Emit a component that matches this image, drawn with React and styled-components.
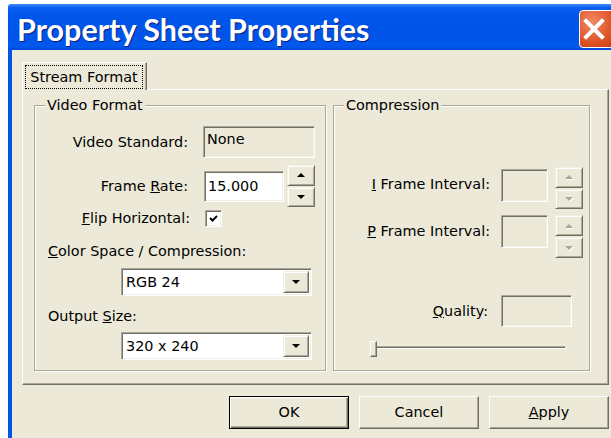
import React from 'react';
import styled, { createGlobalStyle } from 'styled-components';

const GlobalStyle = createGlobalStyle`
  html, body {
    margin: 0;
    padding: 0;
    background: #ffffff;
    overflow: hidden;
  }
  body {
    font-family: "DejaVu Sans", "Liberation Sans", Arial, sans-serif;
    font-size: 14.4px;
    color: #000;
  }
`;

const Screen = styled.div`
  width: 611px;
  height: 438px;
  overflow: hidden;
  padding: 4px 0 0 8px;
  box-sizing: border-box;
`;

const Window = styled.div`
  width: 612px;
  display: flex;
  flex-direction: column;
  border-radius: 3px 3px 0 0;
  overflow: hidden;
`;

const TitleBar = styled.div`
  height: 46px;
  display: flex;
  align-items: flex-start;
  justify-content: space-between;
  padding-left: 9px;
  background: linear-gradient(
    #3c8cf8 0%,
    #0a5ff0 8%,
    #0055ea 30%,
    #0053e6 70%,
    #0059ee 92%,
    #0046d8 100%
  );
`;

const Title = styled.span`
  margin-top: 8px;
  font-family: Lato, "Liberation Sans", sans-serif;
  font-weight: 700;
  font-size: 30.5px;
  line-height: 34px;
  color: #fff;
  text-shadow: 1px 1px 0 #0a1e78;
  white-space: nowrap;
`;

const CloseButton = styled.div`
  width: 36px;
  height: 38px;
  margin: 6px 5px 0 0;
  box-sizing: border-box;
  border: 1px solid #fff;
  border-radius: 4px;
  background: radial-gradient(circle at 35% 30%, #f08a64 0%, #e0582c 55%, #c83c14 100%);
  display: flex;
  align-items: center;
  justify-content: center;
  padding-right: 6px;
`;

const Body = styled.div`
  height: 388px;
  background: #ece9d8;
  border-left: 4px solid #0055e5;
  padding: 12px 0 0 10px;
  box-sizing: border-box;
  display: flex;
  flex-direction: column;
  width: 612px;
`;

const TabStrip = styled.div`
  display: flex;
  height: 28px;
  position: relative;
  z-index: 1;
`;

const Tab = styled.div`
  width: 125px;
  height: 28px;
  box-sizing: border-box;
  background: #ece9d8;
  border-top: 1px solid #fff;
  border-left: 1px solid #fff;
  border-right: 1px solid #716f64;
  box-shadow: inset -1px 0 0 #aca899;
  padding: 2px 3px 0 2px;
`;

const FocusText = styled.div`
  border: 1px dotted #000;
  height: 22px;
  line-height: 22px;
  text-align: center;
  white-space: nowrap;
`;

const Panel = styled.div`
  width: 587px;
  height: 296px;
  margin-top: -1px;
  box-sizing: border-box;
  border-top: 1px solid #fff;
  border-left: 1px solid #fff;
  border-right: 1px solid #716f64;
  border-bottom: 1px solid #716f64;
  box-shadow: inset -1px -1px 0 #aca899;
  padding: 7px 0 0 11px;
  display: flex;
  gap: 7px;
  align-items: flex-start;
`;

const Group = styled.fieldset`
  margin: 0;
  padding: 0;
  width: ${p => p.$width}px;
  height: 274px;
  box-sizing: border-box;
  border: 1px solid #aca899;
  box-shadow: inset 1px 1px 0 #fff, 1px 1px 0 #fff;
  min-width: 0;
`;

const Legend = styled.legend`
  margin-left: 10px;
  padding: 0 2px;
  line-height: 17px;
  background: #ece9d8;
`;

const Column = styled.div`
  display: flex;
  flex-direction: column;
  padding-top: ${p => p.$top}px;
`;

const Row = styled.div`
  display: flex;
  align-items: ${p => p.$align || 'center'};
  height: ${p => p.$h}px;
  margin-top: ${p => p.$mt || 0}px;
`;

const Label = styled.div`
  width: ${p => p.$w}px;
  margin-right: ${p => p.$gap}px;
  text-align: right;
  line-height: ${p => p.$lh || 17}px;
  white-space: nowrap;
`;

const SectionLabel = styled.div`
  margin-top: ${p => p.$mt}px;
  padding-left: 13px;
  line-height: 17px;
  white-space: nowrap;
`;

const Field = styled.div`
  width: ${p => p.$w}px;
  height: ${p => p.$h}px;
  box-sizing: border-box;
  border: 1px solid;
  border-color: #aca899 #fff #fff #aca899;
  box-shadow: inset 1px 1px 0 #716f64, inset -1px -1px 0 #f1efe2;
  background: ${p => (p.$disabled ? '#ece9d8' : '#fff')};
  line-height: 17px;
  padding: ${p => p.$pt || 4}px 3px 0 3px;
  margin-top: ${p => p.$mt || 0}px;
`;

const Spinner = styled.div`
  display: flex;
  flex-direction: column;
  gap: 1px;
  width: 28px;
  height: ${p => p.$h}px;
  margin-left: ${p => p.$ml}px;
`;

const RaisedButton = styled.div`
  flex: 1;
  box-sizing: border-box;
  background: #ece9d8;
  border: 1px solid;
  border-color: #f1efe2 #716f64 #716f64 #f1efe2;
  box-shadow: inset 1px 1px 0 #fff, inset -1px -1px 0 #aca899;
  display: flex;
  align-items: center;
  justify-content: center;
`;

const Arrow = styled.div`
  width: 0;
  height: 0;
  border-left: 4px solid transparent;
  border-right: 4px solid transparent;
  ${p => (p.$up ? 'border-bottom' : 'border-top')}: 4px solid ${p => (p.$disabled ? '#aca899' : '#000')};
  filter: ${p => (p.$disabled ? 'drop-shadow(1px 1px 0 #fff)' : 'none')};
`;

const CheckBox = styled.div`
  width: 17px;
  height: 17px;
  box-sizing: border-box;
  border: 1px solid;
  border-color: #aca899 #fff #fff #aca899;
  box-shadow: inset 1px 1px 0 #716f64, inset -1px -1px 0 #f1efe2;
  background: #fff;
  display: flex;
  align-items: center;
  justify-content: center;
`;

const Select = styled.div`
  display: flex;
  width: 191px;
  height: 28px;
  margin: ${p => p.$mt}px 0 0 86px;
  box-sizing: border-box;
  border: 1px solid;
  border-color: #aca899 #fff #fff #aca899;
  box-shadow: inset 1px 1px 0 #716f64, inset -1px -1px 0 #f1efe2;
  background: #fff;
  padding: 2px;
`;

const SelectValue = styled.div`
  flex: 1;
  line-height: 22px;
  padding-left: 2px;
  white-space: nowrap;
`;

const DropButton = styled(RaisedButton)`
  flex: 0 0 26px;
`;

const SliderTrack = styled.div`
  position: relative;
  width: 195px;
  height: 16px;
  margin: ${p => p.$mt}px 0 0 36px;
`;

const TrackLine = styled.div`
  position: absolute;
  left: 0;
  right: 0;
  top: 5px;
  height: 1px;
  border-top: 1px solid #aca899;
  border-bottom: 1px solid #fff;
  background: #716f64;
`;

const Thumb = styled.div`
  position: absolute;
  left: 0;
  top: 0;
  width: 7px;
  height: 16px;
  box-sizing: border-box;
  background: #ece9d8;
  border: 1px solid;
  border-color: #fff #716f64 #716f64 #fff;
  box-shadow: inset -1px -1px 0 #aca899;
`;

const ButtonRow = styled.div`
  width: 587px;
  margin-top: 11px;
  display: flex;
  justify-content: flex-end;
  gap: 10px;
`;

const DialogButton = styled.div`
  width: 120px;
  height: 33px;
  box-sizing: border-box;
  background: #ece9d8;
  border: 1px solid;
  border-color: ${p => (p.$default ? '#000' : '#fff #716f64 #716f64 #fff')};
  box-shadow: ${p =>
    p.$default
      ? 'inset 1px 1px 0 #fff, inset -1px -1px 0 #716f64, inset -2px -2px 0 #aca899'
      : 'inset -1px -1px 0 #aca899'};
  line-height: 31px;
  text-align: center;
`;

const SpinBox = ({ height, ml, disabled }) => (
  <Spinner $h={height} $ml={ml}>
    <RaisedButton>
      <Arrow $up $disabled={disabled} />
    </RaisedButton>
    <RaisedButton>
      <Arrow $disabled={disabled} />
    </RaisedButton>
  </Spinner>
);

const Dropdown = ({ value, mt }) => (
  <Select $mt={mt}>
    <SelectValue>{value}</SelectValue>
    <DropButton>
      <Arrow />
    </DropButton>
  </Select>
);

export default function App() {
  return (
    <>
      <GlobalStyle />
      <Screen>
        <Window>
          <TitleBar>
            <Title>Property Sheet Properties</Title>
            <CloseButton>
              <svg width="22" height="22" viewBox="0 0 22 22">
                <path d="M3 3 L19 19 M19 3 L3 19" stroke="#fff" strokeWidth="4" strokeLinecap="square" />
              </svg>
            </CloseButton>
          </TitleBar>
          <Body>
            <TabStrip>
              <Tab>
                <FocusText>Stream Format</FocusText>
              </Tab>
            </TabStrip>
            <Panel>
              <Group $width={292}>
                <Legend>Video Format</Legend>
                <Column $top={12}>
                  <Row $h={32}>
                    <Label $w={153} $gap={15}>Video Standard:</Label>
                    <Field $w={112} $h={32} $disabled>None</Field>
                  </Row>
                  <Row $h={42} $mt={7}>
                    <Label $w={153} $gap={16}>Frame <u>R</u>ate:</Label>
                    <Field $w={80} $h={31} $pt={6}>15.000</Field>
                    <SpinBox height={42} ml={3} />
                  </Row>
                  <Row $h={17} $mt={3}>
                    <Label $w={155} $gap={15}><u>F</u>lip Horizontal:</Label>
                    <CheckBox>
                      <svg width="9" height="9" viewBox="0 0 9 9">
                        <path d="M1 4 L3.5 6.5 L8 2" stroke="#000" strokeWidth="2" fill="none" />
                      </svg>
                    </CheckBox>
                  </Row>
                  <SectionLabel $mt={16}><u>C</u>olor Space / Compression:</SectionLabel>
                  <Dropdown value="RGB 24" mt={8} />
                  <SectionLabel $mt={12}>Output <u>S</u>ize:</SectionLabel>
                  <Dropdown value="320 x 240" mt={7} />
                </Column>
              </Group>
              <Group $width={257}>
                <Legend>Compression</Legend>
                <Column $top={53}>
                  <Row $h={42} $align="flex-start">
                    <Label $w={156} $gap={11} $lh={35}><u>I</u> Frame Interval:</Label>
                    <Field $w={47} $h={33} $mt={2} $disabled />
                    <SpinBox height={42} ml={7} disabled />
                  </Row>
                  <Row $h={43} $mt={6} $align="flex-start">
                    <Label $w={156} $gap={11} $lh={33}><u>P</u> Frame Interval:</Label>
                    <Field $w={47} $h={33} $disabled />
                    <SpinBox height={43} ml={7} disabled />
                  </Row>
                  <Row $h={32} $mt={37}>
                    <Label $w={154} $gap={13}><u>Q</u>uality:</Label>
                    <Field $w={71} $h={32} $disabled />
                  </Row>
                  <SliderTrack $mt={14}>
                    <TrackLine />
                    <Thumb />
                  </SliderTrack>
                </Column>
              </Group>
            </Panel>
            <ButtonRow>
              <DialogButton $default>OK</DialogButton>
              <DialogButton>Cancel</DialogButton>
              <DialogButton><u>A</u>pply</DialogButton>
            </ButtonRow>
          </Body>
        </Window>
      </Screen>
    </>
  );
}
